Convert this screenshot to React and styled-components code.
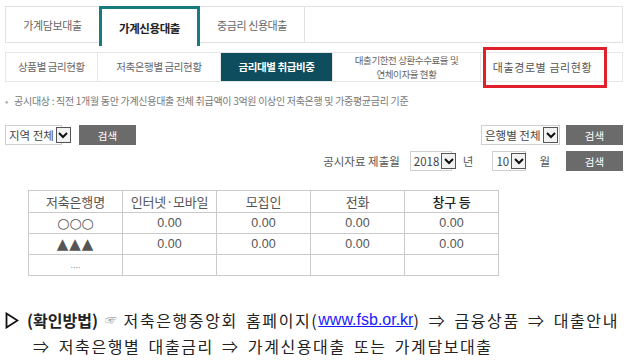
import styled, { createGlobalStyle } from 'styled-components'

const Global = createGlobalStyle`
body {
  margin: 0;
  background: #fff;
  font-family: "Noto Sans CJK KR", "Noto Sans", sans-serif;
}
`
const Page = styled.div`
width: 632px;
height: 361px;
padding: 6px 9px 0 5px;
box-sizing: border-box;
overflow: hidden;
`
const MainTabs = styled.div`
display: flex;
height: 37px;
border: 1px solid #e2e2e2;
box-sizing: border-box;
`
const MainTab = styled.div`
width: ${p => p.w}px;
display: flex;
align-items: center;
justify-content: center;
font-size: ${p => p.active ? 11.5 : 11}px;
letter-spacing: -0.4px;
color: ${p => p.active ? '#222' : '#666'};
font-weight: ${p => p.active ? 700 : 400};
box-sizing: border-box;
border-right: ${p => p.active ? 'none' : '1px solid #e2e2e2'};
${p => p.active && `
  border: 3px solid #177c80;
  border-bottom: none;
  margin: -1px 0 -2px -1px;
  background: #fff;
  height: 40px;
`}
`
const SubWrap = styled.div`
position: relative;
margin-top: 9px;
`
const SubTabs = styled.div`
display: flex;
height: 30px;
border: 1px solid #e6e6e6;
box-sizing: border-box;
`
const SubTab = styled.div`
width: ${p => p.w}px;
flex: ${p => p.grow ? 1 : 'none'};
display: flex;
align-items: center;
justify-content: center;
text-align: center;
font-size: ${p => p.small ? 9.5 : 10.5}px;
line-height: 14px;
letter-spacing: -0.4px;
color: ${p => p.active ? '#fff' : '#666'};
background: ${p => p.active ? '#0e4d5d' : '#fff'};
font-weight: ${p => p.active ? 700 : 400};
border-right: 1px solid #e6e6e6;
box-sizing: border-box;
&:last-child { border-right: none; }
`
const Spaced = styled.span`
letter-spacing: 0.6px;
font-size: 11px;
padding-right: 18px;
color: #555;
`
const RedMark = styled.div`
position: absolute;
left: 478px;
top: -5px;
width: 124px;
height: 41px;
border: 3px solid #e0202a;
box-sizing: border-box;
`
const Notice = styled.p`
margin: 11px 0 0;
font-size: 10px;
letter-spacing: -0.3px;
color: #777;
`
const Bullet = styled.span`
color: #aaa;
margin-right: 6px;
`
const Filters = styled.div`
margin-top: 17px;
display: flex;
justify-content: space-between;
align-items: flex-start;
`
const Group = styled.div`
display: flex;
flex-direction: column;
align-items: flex-end;
gap: 6px;
`
const Line = styled.div`
display: flex;
align-items: center;
gap: ${p => p.gap || 6}px;
font-size: 11.5px;
color: #555;
white-space: nowrap;
`
const Word = styled.span`
margin-right: ${p => p.mr || 0}px;
`
const Select = styled.div`
display: flex;
align-items: center;
height: 20px;
border: 1px solid #cfcfcf;
box-sizing: border-box;
padding-left: 3px;
font-size: 11.5px;
color: #444;
gap: 2px;
white-space: nowrap;
margin-right: ${p => p.mr || 0}px;
`
const Arrow = styled.span`
width: 15px;
height: 16px;
margin-right: 1px;
border: 1px solid #555;
box-sizing: border-box;
display: flex;
align-items: center;
justify-content: center;
background: #f2f2f2;
flex: none;
`
const Button = styled.button`
width: ${p => p.w || 57}px;
height: 20px;
border: none;
background: #6b6b6b;
color: #fff;
font-family: inherit;
font-size: 10.5px;
padding: 0;
margin-left: ${p => p.ml || 0}px;
`
const Table = styled.table`
margin: 19px 0 0 23px;
border-collapse: collapse;
width: 471px;
table-layout: fixed;
th, td {
  border: 1px solid #cacaca;
  height: 20px;
  padding: 0;
  text-align: center;
  color: #555;
}
th {
  font-weight: 400;
  font-size: 13px;
  letter-spacing: -0.2px;
  height: 21px;
}
td {
  font-family: "Liberation Sans", Arial, sans-serif;
  font-size: 12.5px;
}
`
const StrongTh = styled.th`
&& { color: #222; font-weight: 500; }
`
const NameCell = styled.td`
&& {
  font-family: "DejaVu Sans", sans-serif;
  font-size: ${p => p.tri ? 15 : 14}px;
  line-height: 16px;
  letter-spacing: ${p => p.tri ? 1 : 0}px;
}
`
const Dots = styled.td`
&& { font-size: 9px; color: #888; }
`
const Method = styled.div`
margin-top: 31px;
font-size: 16px;
line-height: 26px;
color: #222;
letter-spacing: 1.6px;
word-spacing: 3px;
`
const MethodLine = styled.div`
display: flex;
align-items: center;
white-space: pre;
padding-left: ${p => p.indent || 0}px;
`
const Tri = styled.svg`
margin-right: 8px;
flex: none;
`
const Bold = styled.b`
font-weight: 700;
letter-spacing: 0;
margin-right: 7px;
`
const Hand = styled.span`
color: #999;
font-size: 12px;
margin-right: 5px;
`
const Link = styled.a`
color: #1a1aff;
text-decoration: underline;
font-family: "Liberation Sans", Arial, sans-serif;
letter-spacing: 0;
`

const Chevron = () => (
  <svg width="10" height="8" viewBox="0 0 10 8">
    <path d="M1 2 L5 6 L9 2" fill="none" stroke="#111" strokeWidth="2" />
  </svg>
)

const Drop = ({ label, w, mr }) => (
  <Select style={{ width: w }} mr={mr}>
    <span style={{ flex: 1 }}>{label}</span>
    <Arrow><Chevron /></Arrow>
  </Select>
)

const rows = [
  ['○○○', '0.00', '0.00', '0.00', '0.00'],
  ['▲▲▲', '0.00', '0.00', '0.00', '0.00'],
]

export default function App() {
  return (
    <Page>
      <Global />
      <MainTabs>
        <MainTab w={94}>가계담보대출</MainTab>
        <MainTab w={101} active>가계신용대출</MainTab>
        <MainTab w={105}>중금리 신용대출</MainTab>
      </MainTabs>
      <SubWrap>
        <SubTabs>
          <SubTab w={92}>상품별 금리현황</SubTab>
          <SubTab w={123}>저축은행별 금리현황</SubTab>
          <SubTab w={112} active>금리대별 취급비중</SubTab>
          <SubTab w={148} small>대출기한전 상환수수료율 및<br />연체이자율 현황</SubTab>
          <SubTab grow><Spaced>대출경로별 금리현황</Spaced></SubTab>
        </SubTabs>
        <RedMark />
      </SubWrap>
      <Notice><Bullet>•</Bullet>공시대상 : 직전 1개월 동안 가계신용대출 전체 취급액이 3억원 이상인 저축은행 및 가중평균금리 기준</Notice>
      <Filters>
        <Line gap={17}>
          <Drop label="지역 전체" w={57} />
          <Button>검색</Button>
        </Line>
        <Group>
          <Line>
            <Drop label="은행별 전체" w={79} />
            <Button>검색</Button>
          </Line>
          <Line gap={0}>
            <Word mr={4}>공시자료 제출월</Word>
            <Drop label="2018" w={42} mr={5} />
            <Word mr={13}>년</Word>
            <Drop label="10" w={34} mr={7} />
            <Word mr={10}>월</Word>
            <Button>검색</Button>
          </Line>
        </Group>
      </Filters>
      <Table>
        <thead>
          <tr>
            <th>저축은행명</th>
            <th>인터넷·모바일</th>
            <th>모집인</th>
            <th>전화</th>
            <StrongTh>창구 등</StrongTh>
          </tr>
        </thead>
        <tbody>
          {rows.map((r, i) => (
            <tr key={i}>
              <NameCell tri={i === 1}>{r[0]}</NameCell>
              {r.slice(1).map((c, j) => <td key={j}>{c}</td>)}
            </tr>
          ))}
          <tr>
            <Dots>....</Dots><td /><td /><td /><td />
          </tr>
        </tbody>
      </Table>
      <Method>
        <MethodLine>
          <Tri width="14" height="17" viewBox="0 0 14 17">
            <path d="M1.5 1.5 L12.5 8.5 L1.5 15.5 Z" fill="none" stroke="#111" strokeWidth="1.8" />
          </Tri>
          <Bold>(확인방법)</Bold>
          <Hand>☞</Hand>
          저축은행중앙회 홈페이지(<Link href="#">www.fsb.or.kr</Link>) ⇒ 금융상품 ⇒ 대출안내
        </MethodLine>
        <MethodLine indent={28}>⇒ 저축은행별 대출금리 ⇒ 가계신용대출 또는 가계담보대출</MethodLine>
      </Method>
    </Page>
  )
}
